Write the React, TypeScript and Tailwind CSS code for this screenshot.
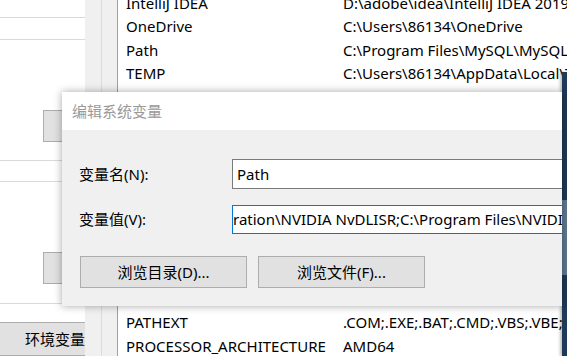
const font = { fontFamily: '"Segoe UI", "Noto Sans", "Noto Sans CJK SC", sans-serif' }

const topRows = [
  ["IntelliJ IDEA", "D:\\adobe\\idea\\IntelliJ IDEA 2019.3.3\\bin;"],
  ["OneDrive", "C:\\Users\\86134\\OneDrive"],
  ["Path", "C:\\Program Files\\MySQL\\MySQL Server 8.0\\bin"],
  ["TEMP", "C:\\Users\\86134\\AppData\\Local\\Temp"],
  ["TMP", "C:\\Users\\86134\\AppData\\Local\\Temp"],
]

const bottomRows = [
  ["PATHEXT", ".COM;.EXE;.BAT;.CMD;.VBS;.VBE;.JS;.JSE"],
  ["PROCESSOR_ARCHITECTURE", "AMD64"],
]

function Row({ name, value }: { name: string; value: string }) {
  return (
    <div className="flex h-[23.6px] shrink-0 items-center whitespace-nowrap text-[15px] text-black">
      <div className="w-[225px] shrink-0 pl-[8px]">{name}</div>
      <div>{value}</div>
    </div>
  )
}

function WinButton({ children, className }: { children?: React.ReactNode; className?: string }) {
  return (
    <div
      className={
        "flex items-center justify-center border border-[#adadad] bg-[#e1e1e1] text-[15px] text-black " +
        (className ?? "")
      }
    >
      {children}
    </div>
  )
}

export default function App() {
  return (
    <div className="relative flex h-[356px] w-[567px] overflow-hidden bg-white" style={font}>
      {/* left part of the environment variables window */}
      <div className="flex w-[85px] shrink-0 flex-col">
        <div className="h-[18px] shrink-0 border-b border-[#dadada]" />
        <div className="h-[22px] shrink-0 border-b border-[#dadada]" />
        <div className="h-[121px] shrink-0 border-b border-[#dadada] pl-[43px] pt-[70px]">
          <WinButton className="h-[32px] w-[80px]" />
        </div>
        <div className="h-[21px] shrink-0 border-b border-[#dadada]" />
        <div className="h-[122px] shrink-0 border-b border-[#dadada] pl-[43px] pt-[70px]">
          <WinButton className="h-[32px] w-[80px]" />
        </div>
        <div className="h-[18px] shrink-0" />
        <WinButton className="h-[40px] w-[85px] justify-end border-l-0 border-r-0">环境变量</WinButton>
      </div>

      <div className="w-[17px] shrink-0 border-r border-[#dcdcdc] bg-[#f0f0f0]" />
      <div className="w-[16px] shrink-0 border-r border-[#a0a0a0] bg-[#f0f0f0]" />

      {/* list */}
      <div className="flex min-w-0 flex-1 flex-col justify-between overflow-hidden">
        <div className="-mt-[9px] flex flex-col">
          {topRows.map(([n, v]) => (
            <Row key={n} name={n} value={v} />
          ))}
        </div>
        <div className="-mb-[2px] flex flex-col">
          {bottomRows.map(([n, v]) => (
            <Row key={n} name={n} value={v} />
          ))}
        </div>
      </div>

      {/* dark edge of the desktop on the right */}
      <div className="absolute right-0 top-[72px] flex h-[284px] w-[5px] flex-col shadow-[-2px_0_3px_rgba(0,0,0,0.25)]">
        <div className="h-[128px] bg-[#1f3a57]" />
        <div className="h-[75px] bg-[#5f7891]" />
        <div className="flex-1 bg-[#1f3a57]" />
      </div>

      {/* edit dialog */}
      <div className="absolute left-[62px] top-[92px] flex h-[214px] w-[500px] flex-col overflow-hidden bg-[#f0f0f0] shadow-[0_0_8px_rgba(0,0,0,0.35)]">
        <div className="flex h-[38px] shrink-0 items-center bg-white pl-[10px] text-[15px] text-[#999999]">
          编辑系统变量
        </div>
        <div className="flex flex-col pl-[17px] pt-[29px]">
          <div className="flex h-[30px] items-center">
            <div className="w-[153px] shrink-0 text-[15px] text-black">变量名(N):</div>
            <div className="flex h-[30px] w-[400px] shrink-0 items-center border border-[#7a7a7a] bg-white pl-[4px] text-[15px] text-black">
              Path
            </div>
          </div>
          <div className="mt-[16px] flex h-[29px] items-center">
            <div className="w-[153px] shrink-0 text-[15px] text-black">变量值(V):</div>
            <div className="flex h-[29px] w-[400px] shrink-0 items-center overflow-hidden whitespace-nowrap border border-[#0078d7] bg-white text-[15px] text-black">
              ration\NVIDIA NvDLISR;C:\Program Files\NVIDIA Corporation\PhysX\Common
            </div>
          </div>
          <div className="mt-[22px] flex gap-[11px] pl-[1px]">
            <WinButton className="h-[32px] w-[167px]">浏览目录(D)...</WinButton>
            <WinButton className="h-[32px] w-[167px]">浏览文件(F)...</WinButton>
          </div>
        </div>
      </div>
    </div>
  )
}
